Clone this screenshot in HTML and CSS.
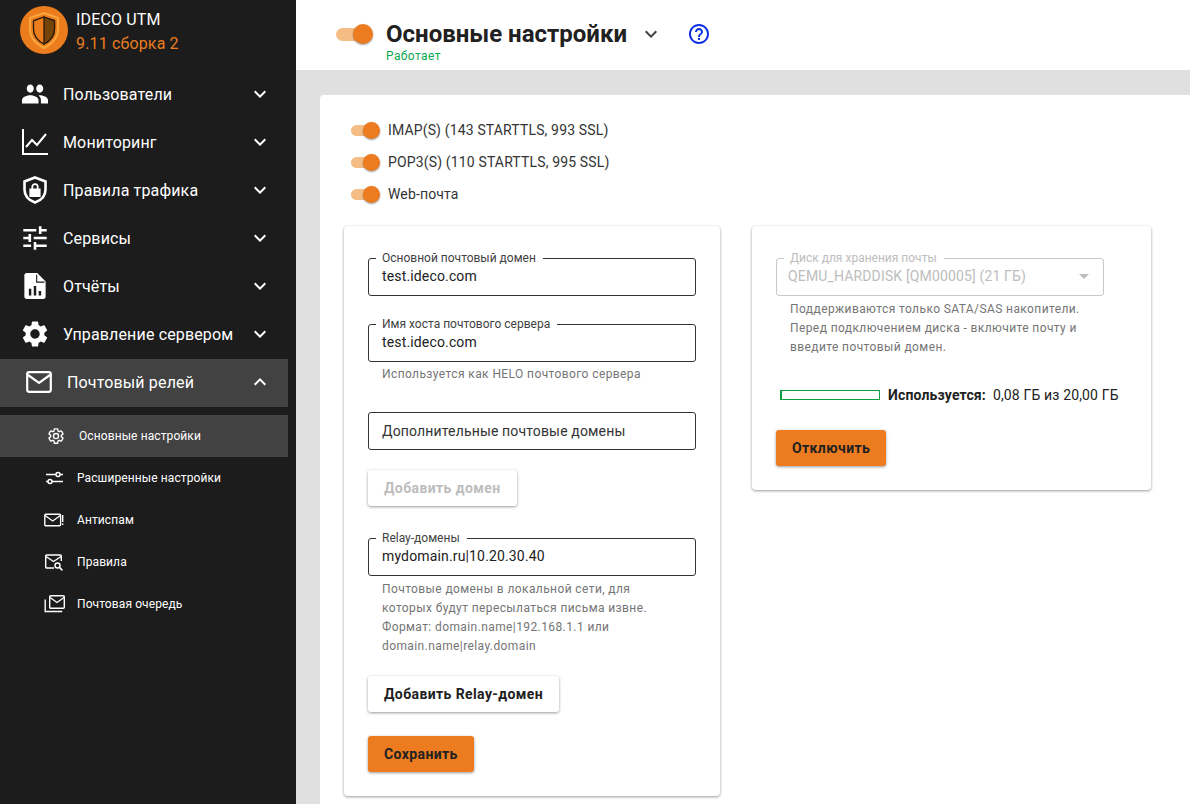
FILE: index.html
```html
<!DOCTYPE html>
<html lang="ru">
<head>
    <meta charset="UTF-8">
    <title>IDECO UTM</title>
    <link rel="stylesheet" href="styles.css">
</head>
<body>
    <aside class="sidebar">
        <div class="brand">
            <svg class="brand-logo" viewBox="0 0 48 48">
                <circle cx="24" cy="24" r="24" fill="#eb7d1e"/>
                <path d="M24 7l14 5v11c0 9-6 15-14 19-8-4-14-10-14-19V12z" fill="#eb7d1e" stroke="#f9a63c" stroke-width="2"/>
                <path d="M24 11l10.500 3.800V23c0 7-4.500 12-10.500 15-6-3-10.500-8-10.500-15v-8.200z" fill="#eb7d1e" stroke="#2b1a08" stroke-width="1.300"/>
                <path d="M24 11l10.500 3.800V23c0 7-4.500 12-10.500 15z" fill="#744507" stroke="#2b1a08" stroke-width="1.300"/>
            </svg>
            <div class="brand-text">
                <div class="brand-name">IDECO UTM</div>
                <div class="brand-version">9.11 сборка 2</div>
            </div>
        </div>
        <nav class="nav">
            <a class="nav-item">
                <svg class="nav-icon" viewBox="1 1.700 22 20.600" preserveAspectRatio="none"><path d="M16 11c1.660 0 2.990-1.340 2.990-3S17.660 5 16 5c-1.660 0-3 1.340-3 3s1.340 3 3 3zm-8 0c1.660 0 2.990-1.340 2.990-3S9.660 5 8 5C6.340 5 5 6.340 5 8s1.340 3 3 3zm0 2c-2.330 0-7 1.170-7 3.500V19h14v-2.500c0-2.330-4.670-3.500-7-3.500zm8 0c-.29 0-.62.02-.97.05 1.160.84 1.970 1.970 1.970 3.450V19h6v-2.500c0-2.330-4.670-3.500-7-3.500z"/></svg>
                <span>Пользователи</span>
                <svg class="chevron" viewBox="0 0 24 24"><path d="M7.410 8.590L12 13.170l4.590-4.580L18 10l-6 6-6-6z"/></svg>
            </a>
            <a class="nav-item">
                <svg class="nav-icon" viewBox="0 0 26 26"><path d="M1 0v25h25" fill="none" stroke="#fff" stroke-width="2"/><path d="M4 18l6-7 5 5 9-11" fill="none" stroke="#fff" stroke-width="2"/></svg>
                <span>Мониторинг</span>
                <svg class="chevron" viewBox="0 0 24 24"><path d="M7.410 8.590L12 13.170l4.590-4.580L18 10l-6 6-6-6z"/></svg>
            </a>
            <a class="nav-item">
                <svg class="nav-icon" viewBox="0 0 26 28"><path d="M13 1.500l10.500 4v8c0 6-4.200 10.800-10.500 13-6.300-2.200-10.500-7-10.500-13v-8z" fill="none" stroke="#fff" stroke-width="2.600"/><path d="M8 13h10v7.500H8z M10 13v-2.200a3 3 0 0 1 6 0V13" fill="#fff" stroke="#fff" stroke-width="1.200"/><path d="M11.200 12.400v-1.600a1.800 1.800 0 0 1 3.600 0v1.600z" fill="#1c1c1c"/></svg>
                <span>Правила трафика</span>
                <svg class="chevron" viewBox="0 0 24 24"><path d="M7.410 8.590L12 13.170l4.590-4.580L18 10l-6 6-6-6z"/></svg>
            </a>
            <a class="nav-item">
                <svg class="nav-icon" viewBox="2 2 20 20"><path d="M3 17v2h6v-2H3zM3 5v2h10V5H3zm10 16v-2h8v-2h-8v-2h-2v6h2zM7 9v2H3v2h4v2h2V9H7zm14 4v-2H11v2h10zm-6-4h2V7h4V5h-4V3h-2v6z"/></svg>
                <span>Сервисы</span>
                <svg class="chevron" viewBox="0 0 24 24"><path d="M7.410 8.590L12 13.170l4.590-4.580L18 10l-6 6-6-6z"/></svg>
            </a>
            <a class="nav-item">
                <svg class="nav-icon" viewBox="1 0 22 25"><path d="M14 1H4.500C3.400 1 2.500 1.900 2.500 3v19c0 1.100.9 2 2 2h15c1.100 0 2-.9 2-2V8.500z"/><path d="M13.500 2.500v6.500h7" fill="none" stroke="#1c1c1c" stroke-width="1"/><path d="M6.500 15h2.200v6H6.500zM10.900 12.500h2.200V21h-2.200zM15.300 17h2.200v4h-2.200z" fill="#1c1c1c"/></svg>
                <span>Отчёты</span>
                <svg class="chevron" viewBox="0 0 24 24"><path d="M7.410 8.590L12 13.170l4.590-4.580L18 10l-6 6-6-6z"/></svg>
            </a>
            <a class="nav-item">
                <svg class="nav-icon" viewBox="2 2 20 20"><path d="M19.140 12.940c.04-.3.06-.61.06-.94 0-.32-.02-.64-.07-.94l2.030-1.580c.18-.14.23-.41.12-.61l-1.920-3.320c-.12-.22-.37-.29-.59-.22l-2.390.96c-.5-.38-1.030-.7-1.620-.94l-.36-2.540c-.04-.24-.24-.41-.48-.41h-3.840c-.24 0-.43.17-.47.41l-.36 2.540c-.59.24-1.130.57-1.620.94l-2.390-.96c-.22-.08-.47 0-.59.22L2.740 8.870c-.12.21-.08.47.12.61l2.030 1.580c-.05.3-.09.63-.09.94s.02.64.07.94l-2.030 1.580c-.18.14-.23.41-.12.61l1.920 3.320c.12.22.37.29.59.22l2.390-.96c.5.38 1.030.7 1.620.94l.36 2.540c.05.24.24.41.48.41h3.840c.24 0 .44-.17.47-.41l.36-2.540c.59-.24 1.130-.56 1.620-.94l2.390.96c.22.08.47 0 .59-.22l1.920-3.320c.12-.22.07-.47-.12-.61l-2.010-1.580zM12 15.600c-1.980 0-3.600-1.620-3.600-3.600s1.620-3.600 3.600-3.600 3.600 1.620 3.600 3.600-1.620 3.600-3.600 3.600z"/></svg>
                <span>Управление сервером</span>
                <svg class="chevron" viewBox="0 0 24 24"><path d="M7.410 8.590L12 13.170l4.590-4.580L18 10l-6 6-6-6z"/></svg>
            </a>
            <a class="nav-item nav-item-open">
                <svg class="nav-icon" viewBox="0 0 26 22"><rect x="1.200" y="1.200" width="23.600" height="19.600" rx="2" fill="none" stroke="#fff" stroke-width="2.200"/><path d="M2 4l11 8 11-8" fill="none" stroke="#fff" stroke-width="2.200"/></svg>
                <span>Почтовый релей</span>
                <svg class="chevron" viewBox="0 0 24 24"><path d="M7.410 15.410L12 10.830l4.590 4.580L18 14l-6-6-6 6z"/></svg>
            </a>
            <div class="subnav">
                <a class="sub-item sub-item-active">
                    <svg class="sub-icon" viewBox="0 0 24 24"><path fill="none" stroke="#fff" stroke-width="1.800" d="M19.140 12.940c.04-.3.06-.61.06-.94 0-.32-.02-.64-.07-.94l2.030-1.580c.18-.14.23-.41.12-.61l-1.920-3.320c-.12-.22-.37-.29-.59-.22l-2.390.96c-.5-.38-1.030-.7-1.620-.94l-.36-2.540c-.04-.24-.24-.41-.48-.41h-3.840c-.24 0-.43.17-.47.41l-.36 2.540c-.59.24-1.130.57-1.620.94l-2.390-.96c-.22-.08-.47 0-.59.22L2.740 8.870c-.12.21-.08.47.12.61l2.030 1.580c-.05.3-.09.63-.09.94s.02.64.07.94l-2.030 1.580c-.18.14-.23.41-.12.61l1.920 3.320c.12.22.37.29.59.22l2.390-.96c.5.38 1.030.7 1.620.94l.36 2.540c.05.24.24.41.48.41h3.840c.24 0 .44-.17.47-.41l.36-2.540c.59-.24 1.130-.56 1.620-.94l2.390.96c.22.08.47 0 .59-.22l1.920-3.320c.12-.22.07-.47-.12-.61l-2.010-1.580z"/><circle cx="12" cy="12" r="3.400" fill="none" stroke="#fff" stroke-width="1.800"/></svg>
                    <span>Основные настройки</span>
                </a>
                <a class="sub-item">
                    <svg class="sub-icon" viewBox="0 0 18 18"><path d="M1 5.500h10M15 5.500h3M1 12.500h2M7 12.500h11" stroke="#fff" stroke-width="1.500" fill="none"/><circle cx="13" cy="5.500" r="2" fill="none" stroke="#fff" stroke-width="1.500"/><circle cx="5" cy="12.500" r="2" fill="none" stroke="#fff" stroke-width="1.500"/></svg>
                    <span>Расширенные настройки</span>
                </a>
                <a class="sub-item">
                    <svg class="sub-icon" viewBox="0 0 18 18"><rect x="-.2" y="3.200" width="15.800" height="11.600" rx="1" fill="none" stroke="#fff" stroke-width="1.400"/><path d="M0 4.500l7.700 5.500 7.700-5.500" fill="none" stroke="#fff" stroke-width="1.400"/><path d="M17 4h1.400v7H17zM17 12.500h1.400v1.600H17z" fill="#fff"/></svg>
                    <span>Антиспам</span>
                </a>
                <a class="sub-item">
                    <svg class="sub-icon" viewBox="0 0 18 18"><path d="M9 15H1.700a1 1 0 0 1-1-1V3a1 1 0 0 1 1-1h13.600a1 1 0 0 1 1 1v5" fill="none" stroke="#fff" stroke-width="1.400"/><path d="M1 3.500l7.500 5 7.500-5" fill="none" stroke="#fff" stroke-width="1.400"/><circle cx="12.500" cy="12.500" r="2.500" fill="none" stroke="#fff" stroke-width="1.400"/><path d="M14.400 14.400l3 3" stroke="#fff" stroke-width="1.500"/></svg>
                    <span>Правила</span>
                </a>
                <a class="sub-item">
                    <svg class="sub-icon" viewBox="0 0 18 18"><rect x="4.700" y=".7" width="14.600" height="12.600" rx="1" fill="none" stroke="#fff" stroke-width="1.400"/><path d="M5 2.500l7 5 7-5" fill="none" stroke="#fff" stroke-width="1.400"/><path d="M.2 4.500v12h17" fill="none" stroke="#fff" stroke-width="1.400"/></svg>
                    <span>Почтовая очередь</span>
                </a>
            </div>
        </nav>
    </aside>

    <main class="content">
        <header class="topbar">
            <div class="title-row">
                <div class="toggle toggle-big"><i class="knob"></i></div>
                <h1 class="title">Основные настройки</h1>
                <svg class="title-chevron" viewBox="0 0 24 24"><path d="M7.410 8.590L12 13.170l4.590-4.580L18 10l-6 6-6-6z"/></svg>
                <svg class="help" viewBox="0 0 24 24"><path d="M11 18h2v-2h-2v2zm1-16C6.480 2 2 6.480 2 12s4.480 10 10 10 10-4.480 10-10S17.520 2 12 2zm0 18c-4.410 0-8-3.590-8-8s3.590-8 8-8 8 3.590 8 8-3.590 8-8 8zm0-14c-2.210 0-4 1.790-4 4h2c0-1.100.9-2 2-2s2 .9 2 2c0 2-3 1.750-3 5h2c0-2.250 3-2.500 3-5 0-2.210-1.790-4-4-4z"/></svg>
            </div>
            <div class="status">Работает</div>
        </header>

        <section class="page">
            <div class="switches">
                <label class="switch-row"><div class="toggle"><i class="knob"></i></div>IMAP(S) (143 STARTTLS, 993 SSL)</label>
                <label class="switch-row"><div class="toggle"><i class="knob"></i></div>POP3(S) (110 STARTTLS, 995 SSL)</label>
                <label class="switch-row"><div class="toggle"><i class="knob"></i></div>Web-почта</label>
            </div>

            <div class="columns">
                <div class="card card-left">
                    <fieldset class="field">
                        <legend>Основной почтовый домен</legend>
                        <div class="value">test.ideco.com</div>
                    </fieldset>
                    <fieldset class="field field-host">
                        <legend>Имя хоста почтового сервера</legend>
                        <div class="value">test.ideco.com</div>
                    </fieldset>
                    <p class="hint">Используется как HELO почтового сервера</p>
                    <div class="field-plain">Дополнительные почтовые домены</div>
                    <button class="btn btn-disabled btn-add-domain">Добавить домен</button>
                    <fieldset class="field field-relay">
                        <legend>Relay-домены</legend>
                        <div class="value">mydomain.ru|10.20.30.40</div>
                    </fieldset>
                    <p class="hint hint-relay">Почтовые домены в локальной сети, для<br>которых будут пересылаться письма извне.<br>Формат: domain.name|192.168.1.1 или<br>domain.name|relay.domain</p>
                    <button class="btn btn-add-relay">Добавить Relay-домен</button>
                    <button class="btn btn-primary btn-save">Сохранить</button>
                </div>

                <div class="card card-right">
                    <fieldset class="field field-disabled">
                        <legend>Диск для хранения почты</legend>
                        <div class="value">QEMU_HARDDISK [QM00005] (21 ГБ)<i class="caret"></i></div>
                    </fieldset>
                    <p class="hint hint-disk">Поддерживаются только SATA/SAS накопители.<br>Перед подключением диска - включите почту и<br>введите почтовый домен.</p>
                    <div class="usage">
                        <div class="usage-bar"><div class="usage-fill" style="width: 0.4%"></div></div>
                        <b>Используется:</b>
                        <span>0,08 ГБ из 20,00 ГБ</span>
                    </div>
                    <button class="btn btn-primary btn-off">Отключить</button>
                </div>
            </div>
        </section>
    </main>
</body>
</html>
```

FILE: styles.css
```css
html, body {
    height: 100%;
}
body {
    margin: 0;
    display: flex;
    overflow: hidden;
    background: #e0e0e0;
    font-family: Roboto, "Liberation Sans", sans-serif;
    letter-spacing: .15px;
    color: #212121;
}

/* sidebar */
.sidebar {
    flex: 0 0 296px;
    height: 100%;
    background: #1c1c1c;
    color: #fff;
}
.brand {
    display: flex;
    height: 70px;
    padding: 6px 0 0 20px;
    box-sizing: border-box;
}
.brand-logo {
    width: 48px;
    height: 48px;
}
.brand-text {
    margin-left: 8px;
    font-size: 16px;
    line-height: 24px;
    padding-top: 2px;
}
.brand-version {
    color: #eb7d1e;
}
.nav-item {
    display: flex;
    align-items: center;
    width: 288px;
    height: 48px;
    box-sizing: border-box;
    padding: 0 16px 0 22px;
    font-size: 16px;
}
.nav-icon {
    flex: 0 0 26px;
    height: 28px;
    margin-right: 15px;
    fill: #fff;
}
.nav-item-open {
    background: #424242;
    padding-left: 26px;
    padding-bottom: 2px;
    margin-top: 1px;
}
.chevron {
    width: 24px;
    height: 24px;
    margin-left: auto;
    fill: #fff;
}
.subnav {
    margin-top: 8px;
}
.sub-item {
    display: flex;
    align-items: center;
    width: 288px;
    height: 42px;
    box-sizing: border-box;
    padding-left: 45px;
    font-size: 12px;
    letter-spacing: .1px;
}
.sub-item-active {
    background: #424242;
    padding-left: 47px;
}
.sub-icon {
    flex: 0 0 18px;
    height: 18px;
    margin-right: 14px;
    overflow: visible;
}

/* main */
.content {
    flex: 1;
    min-width: 0;
}
.topbar {
    height: 70px;
    box-sizing: border-box;
    padding: 18px 0 0 40px;
    background: #fff;
}
.title-row {
    display: flex;
    align-items: center;
    height: 32px;
}
.title {
    margin: 0 0 0 13px;
    font-size: 24px;
    line-height: 32px;
    font-weight: 700;
    letter-spacing: 0;
}
.title-chevron {
    width: 24px;
    height: 24px;
    margin-left: 12px;
    fill: #424242;
}
.help {
    width: 24px;
    height: 24px;
    margin-left: 24px;
    fill: #0d2ee0;
}
.status {
    padding-left: 50px;
    font-size: 12px;
    line-height: 12px;
    letter-spacing: .4px;
    color: #0aa84f;
}

.toggle {
    display: flex;
    align-items: center;
    justify-content: flex-end;
    width: 25px;
    height: 11px;
    margin-right: 12px;
    border-radius: 6px;
    background: #f5bd85;
}
.knob {
    flex: 0 0 17px;
    height: 17px;
    margin-right: -4px;
    border-radius: 50%;
    background: #ec7c1f;
    box-shadow: 0 1px 2px rgba(0, 0, 0, .4);
}
.toggle-big {
    width: 32px;
    height: 13px;
    margin-right: 5px;
    border-radius: 7px;
}
.toggle-big .knob {
    flex-basis: 20px;
    height: 20px;
    margin-right: -5px;
}

.page {
    box-sizing: border-box;
    height: 709px;
    margin: 25px 0 0 24px;
    padding: 19px 0 0 24px;
    background: #fff;
    border-radius: 4px 0 0 0;
}
.switches {
    padding-left: 7px;
}
.switch-row {
    display: flex;
    align-items: center;
    height: 32px;
    font-size: 14px;
    color: #333;
}
.columns {
    display: flex;
    align-items: flex-start;
    gap: 32px;
    margin-top: 16px;
}
.card {
    box-sizing: border-box;
    padding: 25px 24px 24px;
    background: #fff;
    border-radius: 4px;
    box-shadow: 0 1px 3px rgba(0, 0, 0, .4);
}
.card-left {
    width: 376px;
}
.card-right {
    width: 399px;
}

/* fields */
.field {
    display: block;
    box-sizing: border-box;
    width: 328px;
    height: 45px;
    margin: 0;
    padding: 0 13px;
    min-width: 0;
    border: 1px solid #333;
    border-radius: 3px;
}
.field legend {
    margin-left: -6px;
    padding: 0 7px 0 6px;
    font-size: 12px;
    line-height: 14px;
    letter-spacing: 0;
    color: #424242;
}
.value {
    font-size: 14px;
    line-height: 22px;
}
.field-host {
    margin-top: 21px;
}
.field-relay {
    margin-top: 25px;
}
.field-plain {
    box-sizing: border-box;
    width: 328px;
    height: 38px;
    margin-top: 28px;
    padding-left: 13px;
    border: 1px solid #333;
    border-radius: 3px;
    font-size: 14px;
    line-height: 36px;
    color: #333;
}
.hint {
    margin: 3px 0 0;
    padding-left: 14px;
    font-size: 12px;
    line-height: 19px;
    letter-spacing: .4px;
    color: #757575;
}
.hint-relay {
    margin-top: 4px;
}
.hint-disk {
    margin-top: 4px;
}
.field-disabled {
    padding-left: 11px;
    border-color: #c8c8c8;
}
.field-disabled legend {
    margin-left: -4px;
    color: #bdbdbd;
}
.field-disabled .value {
    display: flex;
    align-items: center;
    justify-content: space-between;
    padding-right: 1px;
    color: #bdbdbd;
}
.caret {
    width: 0;
    height: 0;
    border: 5px solid transparent;
    border-top-color: #bdbdbd;
    border-bottom-width: 0;
}

/* buttons */
.btn {
    display: block;
    height: 36px;
    padding: 0 16px;
    border: 0;
    border-radius: 3px;
    background: #fff;
    font-family: inherit;
    font-size: 14px;
    font-weight: 700;
    letter-spacing: .4px;
    color: #212121;
    box-shadow: 0 1px 3px rgba(0, 0, 0, .4);
}
.btn-primary {
    background: #ec7c1f;
}
.btn-disabled {
    color: #bdbdbd;
}
.btn-add-domain {
    margin-top: 20px;
}
.btn-add-relay {
    margin-top: 20px;
}
.btn-save {
    margin-top: 24px;
}
.btn-off {
    margin-top: 25px;
}

.usage {
    display: flex;
    align-items: center;
    height: 20px;
    margin-top: 28px;
    padding-left: 4px;
    font-size: 14px;
}
.usage-bar {
    box-sizing: border-box;
    width: 100px;
    height: 10px;
    margin-right: 8px;
    border: 1px solid #0a9f3f;
}
.usage-fill {
    height: 100%;
    background: #0a9f3f;
}
.usage b {
    margin-right: 7px;
}
```
